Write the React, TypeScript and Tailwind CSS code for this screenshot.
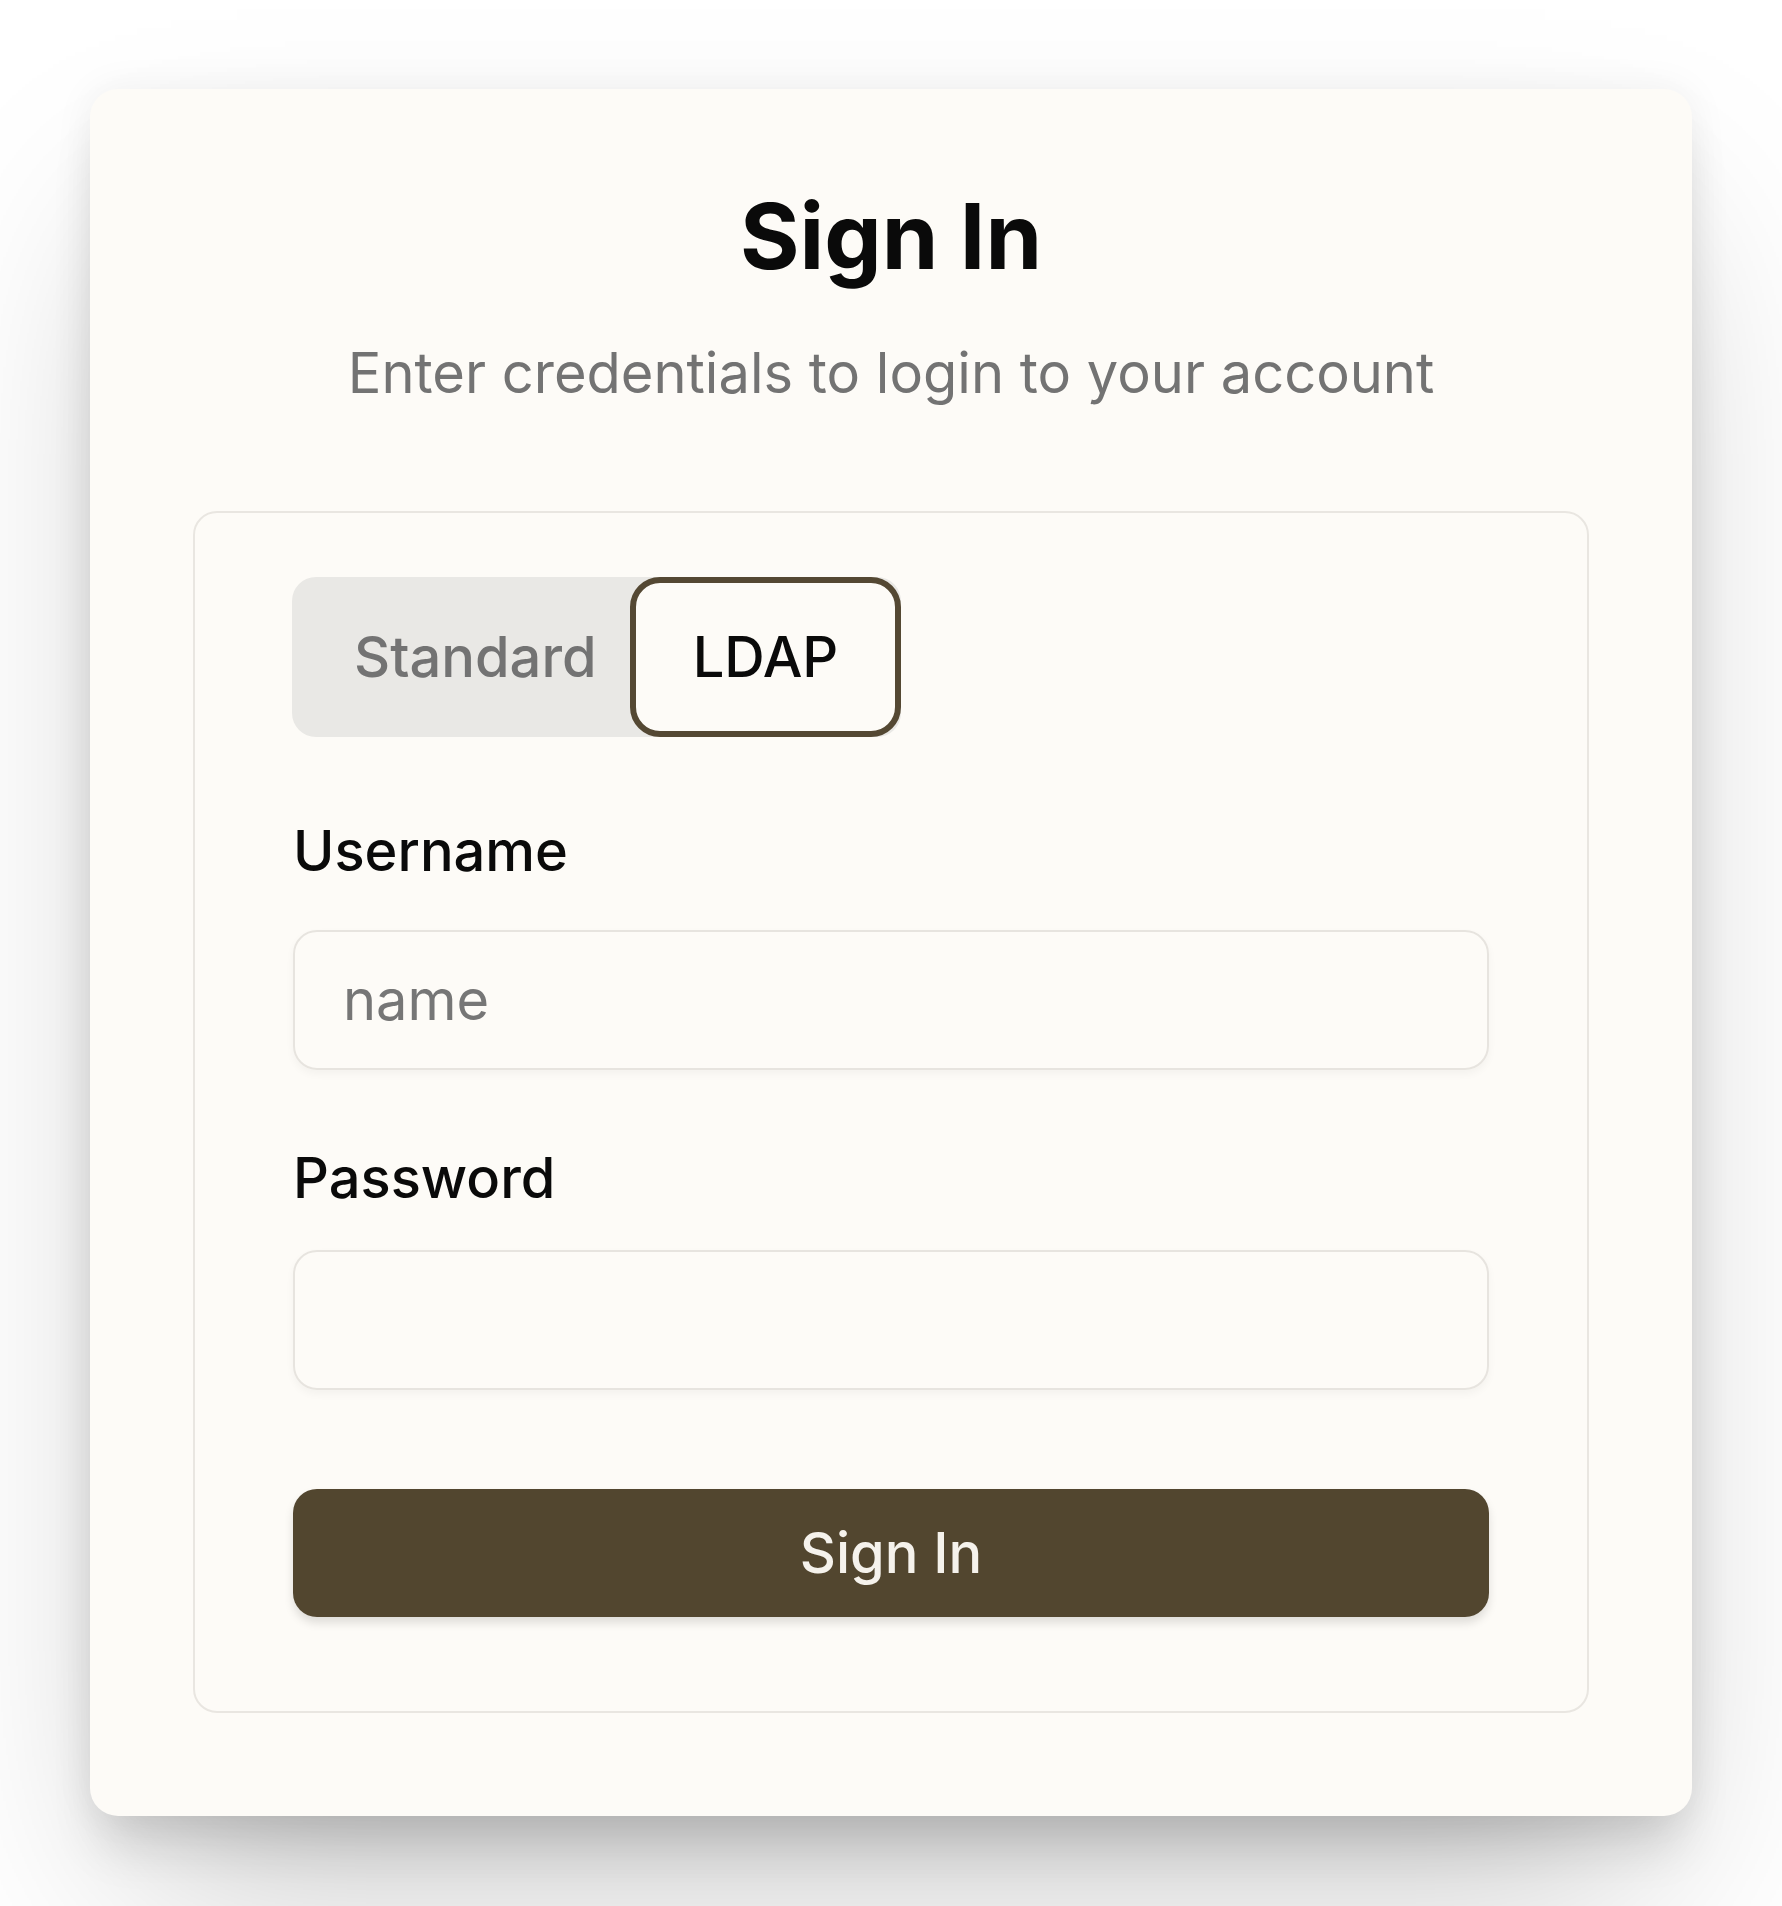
import { useState } from "react"

function App() {
  const [tab, setTab] = useState("ldap")
  const [form, setForm] = useState({ username: "", password: "" })

  const handleChange = (e) => {
    setForm(prev => ({
      ...prev,
      [e.target.name]: e.target.value
    }))
  }

  return (
    <div className="min-h-screen bg-white pt-[89px] pb-[90px] font-['Inter',sans-serif]">
      <div className="mx-auto w-[1602px] rounded-[28px] bg-[#fdfbf7] px-[103px] pt-[100px] pb-[103px] shadow-[0_100px_200px_-48px_rgba(0,0,0,0.25),0_40px_50px_-10px_rgba(0,0,0,0.12),0_0_40px_rgba(0,0,0,0.06)]">
        <h1 className="text-center text-[91px] font-bold leading-[95px] text-[#0a0a0a]">Sign In</h1>
        <p className="mt-[47px] text-center text-[56px] leading-[84px] text-[#737373]">
          Enter credentials to login to your account
        </p>

        <div className="mt-[96px] rounded-[24px] border-2 border-[#e9e6e1] px-[98px] pt-[64px] pb-[94px]">
          <div className="-ml-[1px] flex h-[160px] w-fit rounded-[24px] bg-[#e9e8e5]">
            <button
              className={
                tab === "standard"
                  ? "flex items-center rounded-[30px] border-[6px] border-[#544833] bg-[#fdfbf7] pl-[56px] pr-[27px] text-[56px] font-medium text-[#0a0a0a]"
                  : "flex items-center pl-[62px] pr-[33px] text-[56px] font-medium text-[#737373]"
              }
              onClick={() => setTab("standard")}
            >
              Standard
            </button>
            <button
              className={
                tab === "ldap"
                  ? "flex items-center rounded-[30px] border-[6px] border-[#544833] bg-[#fdfbf7] px-[57px] text-[56px] font-medium text-[#0a0a0a]"
                  : "flex items-center px-[63px] text-[56px] font-medium text-[#737373]"
              }
              onClick={() => setTab("ldap")}
            >
              LDAP
            </button>
          </div>

          <label htmlFor="username" className="mt-[86px] block text-[56px] font-medium leading-[56px] text-[#0a0a0a]">
            Username
          </label>
          <input
            id="username"
            name="username"
            type="text"
            placeholder="name"
            value={form.username}
            onChange={handleChange}
            className="mt-[51px] block h-[140px] w-full rounded-[24px] border-2 border-[#e7e4df] bg-transparent pl-[48px] text-[56px] text-[#0a0a0a] shadow-[0_4px_8px_rgba(0,0,0,0.04)] outline-none placeholder:text-[#767676]"
          />

          <label htmlFor="password" className="mt-[80px] block text-[56px] font-medium leading-[56px] text-[#0a0a0a]">
            Password
          </label>
          <input
            id="password"
            name="password"
            type="password"
            value={form.password}
            onChange={handleChange}
            className="mt-[44px] block h-[140px] w-full rounded-[24px] border-2 border-[#e7e4df] bg-transparent pl-[48px] text-[56px] text-[#0a0a0a] shadow-[0_4px_8px_rgba(0,0,0,0.04)] outline-none"
          />

          <button className="mt-[99px] flex h-[128px] w-full items-center justify-center rounded-[24px] bg-[#52462f] text-[56px] font-medium text-[#f5f2ec] shadow-[0_6px_10px_rgba(0,0,0,0.12)]">
            Sign In
          </button>
        </div>
      </div>
    </div>
  )
}

export default App
